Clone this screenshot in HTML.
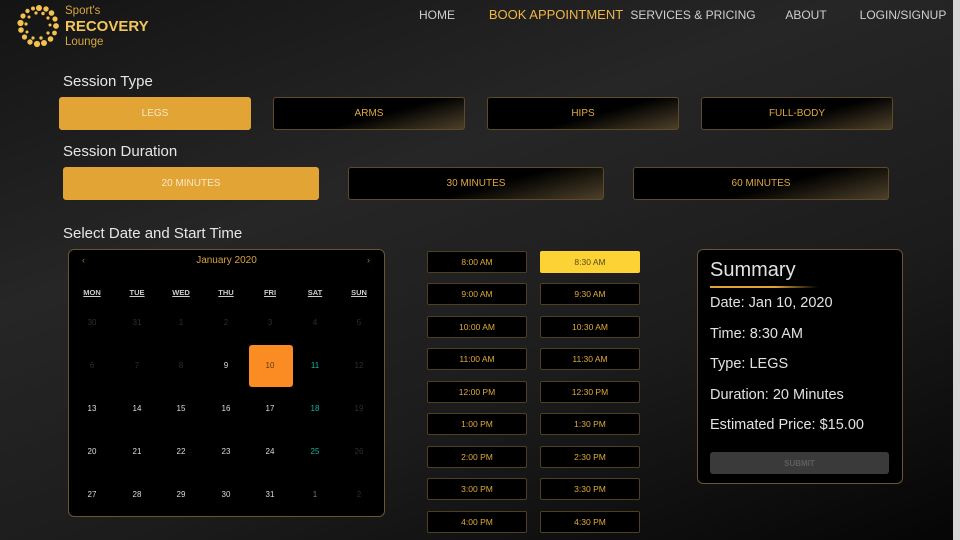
<!DOCTYPE html>
<html><head><meta charset="utf-8"><style>
*{margin:0;padding:0;box-sizing:border-box}
body{width:960px;height:540px;overflow:hidden;font-family:"Liberation Sans",sans-serif;background:linear-gradient(160deg,#141414 0%,#262626 35%,#1c1c1c 65%,#050505 100%);position:relative;color:#ddd}
.a{position:absolute}
.nav{top:8px;font-size:12px;color:#cfcfcf;width:160px;text-align:center;transform:translateX(-80px)}
.lbl{font-size:15px;color:#e6e6e6}
.btn{position:absolute;height:33px;border:1px solid #5c4a2a;border-radius:3px;background:linear-gradient(165deg,#000 55%,#4d4029 100%);color:#e0a93c;font-size:10px;display:flex;align-items:center;justify-content:center}
.btn.on{background:#e3a436;border-color:#e3a436;color:#fbe9c4}
.cal{left:68px;top:249px;width:317px;height:268px;background:#000;border:1.5px solid #6b5530;border-radius:6px}
.d{position:absolute;width:44px;text-align:center;font-size:8px;color:#ddd;transform:translateX(-22px)}
.g{color:#2e2e2e}.t{color:#1ab0a0}
.hd{position:absolute;width:44px;text-align:center;font-size:7.5px;font-weight:bold;color:#ccc;text-decoration:underline;transform:translateX(-22px)}
.ts{position:absolute;width:100px;height:22px;background:#000;border:1px solid #4d3f22;border-radius:2px;color:#e0a93c;font-size:8.5px;display:flex;align-items:center;justify-content:center}
.ts.on{background:#fdd234;border-color:#fdd234;color:#5a4a20}
.sum{left:697px;top:249px;width:206px;height:235px;background:#000;border:1.5px solid #6b5530;border-radius:6px}
.sl{position:absolute;left:12px;font-size:14.5px;color:#e2e2e2}
</style></head><body>
<svg class="a" style="left:16px;top:4px" width="48" height="46" viewBox="0 0 48 46">
<g fill="#f2c14e">
<circle cx="23" cy="4" r="3"/><circle cx="30" cy="5" r="2.7"/><circle cx="35.5" cy="9" r="2.8"/><circle cx="39" cy="15" r="2.6"/><circle cx="40" cy="22" r="2.9"/><circle cx="38.5" cy="29" r="2.4"/><circle cx="34.5" cy="35" r="2.8"/><circle cx="28" cy="39" r="3"/><circle cx="21" cy="40" r="3.1"/><circle cx="14" cy="38" r="2.7"/><circle cx="8.5" cy="33" r="2.6"/><circle cx="5" cy="26" r="2.8"/><circle cx="4.5" cy="19" r="3.1"/><circle cx="7" cy="12" r="2.6"/><circle cx="11.5" cy="7" r="2.2"/><circle cx="17" cy="4.5" r="2"/>
<circle cx="20" cy="9" r="1.6"/><circle cx="27" cy="9.5" r="1.7"/><circle cx="32" cy="14" r="1.6"/><circle cx="34" cy="21" r="1.5"/><circle cx="32" cy="29" r="1.6"/><circle cx="25" cy="34" r="1.7"/><circle cx="17" cy="34" r="1.6"/><circle cx="11" cy="28" r="1.5"/><circle cx="10" cy="20" r="1.6"/><circle cx="13" cy="13" r="1.5"/>
</g></svg>
<div class="a" style="left:65px;top:5px;font-size:11.5px;color:#d6a640;line-height:12px">Sport's</div>
<div class="a" style="left:65px;top:18px;font-size:15px;font-weight:bold;color:#f2c55a;line-height:17px">RECOVERY</div>
<div class="a" style="left:65px;top:36px;font-size:11.5px;color:#d6a640;line-height:12px">Lounge</div>
<div class="a nav" style="left:437px">HOME</div>
<div class="a nav" style="left:556px;color:#f0b545;font-size:13px;top:7px">BOOK APPOINTMENT</div>
<div class="a nav" style="left:693px">SERVICES &amp; PRICING</div>
<div class="a nav" style="left:806px">ABOUT</div>
<div class="a nav" style="left:903px">LOGIN/SIGNUP</div>
<div class="a" style="left:953px;top:0;width:7px;height:540px;background:#d8d8d8"></div>

<div class="a lbl" style="left:63px;top:73px">Session Type</div>
<div class="btn on" style="left:59px;top:97px;width:192px">LEGS</div>
<div class="btn" style="left:273px;top:97px;width:192px">ARMS</div>
<div class="btn" style="left:487px;top:97px;width:192px">HIPS</div>
<div class="btn" style="left:701px;top:97px;width:192px">FULL-BODY</div>
<div class="a lbl" style="left:63px;top:143px">Session Duration</div>
<div class="btn on" style="left:63px;top:167px;width:256px">20 MINUTES</div>
<div class="btn" style="left:348px;top:167px;width:256px">30 MINUTES</div>
<div class="btn" style="left:633px;top:167px;width:256px">60 MINUTES</div>
<div class="a lbl" style="left:63px;top:225px">Select Date and Start Time</div>

<div class="a cal"></div>
<div class="a" style="left:82px;top:255px;font-size:9px;color:#a07a30">‹</div>
<div class="a" style="left:367px;top:255px;font-size:9px;color:#a07a30">›</div>
<div class="a" style="left:68px;width:317px;text-align:center;top:255px;font-size:10px;color:#d9a23e">January 2020</div>
<div class="a" style="left:249px;top:345px;width:44px;height:42px;background:#fb8c24;border-radius:3px"></div>
<div class="hd" style="left:92px;top:288px">MON</div><div class="hd" style="left:137px;top:288px">TUE</div><div class="hd" style="left:181px;top:288px">WED</div><div class="hd" style="left:226px;top:288px">THU</div><div class="hd" style="left:270px;top:288px">FRI</div><div class="hd" style="left:315px;top:288px">SAT</div><div class="hd" style="left:359px;top:288px">SUN</div>
<div class="d g" style="left:92px;top:318px">30</div><div class="d g" style="left:137px;top:318px">31</div><div class="d g" style="left:181px;top:318px">1</div><div class="d g" style="left:226px;top:318px">2</div><div class="d g" style="left:270px;top:318px">3</div><div class="d g" style="left:315px;top:318px">4</div><div class="d g" style="left:359px;top:318px">5</div>
<div class="d g" style="left:92px;top:361px">6</div><div class="d g" style="left:137px;top:361px">7</div><div class="d g" style="left:181px;top:361px">8</div><div class="d" style="left:226px;top:361px">9</div><div class="d" style="left:270px;top:361px;color:#5a3a10">10</div><div class="d t" style="left:315px;top:361px">11</div><div class="d g" style="left:359px;top:361px">12</div>
<div class="d" style="left:92px;top:404px">13</div><div class="d" style="left:137px;top:404px">14</div><div class="d" style="left:181px;top:404px">15</div><div class="d" style="left:226px;top:404px">16</div><div class="d" style="left:270px;top:404px">17</div><div class="d t" style="left:315px;top:404px">18</div><div class="d g" style="left:359px;top:404px">19</div>
<div class="d" style="left:92px;top:447px">20</div><div class="d" style="left:137px;top:447px">21</div><div class="d" style="left:181px;top:447px">22</div><div class="d" style="left:226px;top:447px">23</div><div class="d" style="left:270px;top:447px">24</div><div class="d t" style="left:315px;top:447px">25</div><div class="d g" style="left:359px;top:447px">26</div>
<div class="d" style="left:92px;top:490px">27</div><div class="d" style="left:137px;top:490px">28</div><div class="d" style="left:181px;top:490px">29</div><div class="d" style="left:226px;top:490px">30</div><div class="d" style="left:270px;top:490px">31</div><div class="d" style="left:315px;top:490px;color:#777">1</div><div class="d g" style="left:359px;top:490px">2</div>

<div class="ts" style="left:427px;top:251px">8:00 AM</div><div class="ts on" style="left:540px;top:251px">8:30 AM</div>
<div class="ts" style="left:427px;top:283px">9:00 AM</div><div class="ts" style="left:540px;top:283px">9:30 AM</div>
<div class="ts" style="left:427px;top:316px">10:00 AM</div><div class="ts" style="left:540px;top:316px">10:30 AM</div>
<div class="ts" style="left:427px;top:348px">11:00 AM</div><div class="ts" style="left:540px;top:348px">11:30 AM</div>
<div class="ts" style="left:427px;top:381px">12:00 PM</div><div class="ts" style="left:540px;top:381px">12:30 PM</div>
<div class="ts" style="left:427px;top:413px">1:00 PM</div><div class="ts" style="left:540px;top:413px">1:30 PM</div>
<div class="ts" style="left:427px;top:446px">2:00 PM</div><div class="ts" style="left:540px;top:446px">2:30 PM</div>
<div class="ts" style="left:427px;top:478px">3:00 PM</div><div class="ts" style="left:540px;top:478px">3:30 PM</div>
<div class="ts" style="left:427px;top:511px">4:00 PM</div><div class="ts" style="left:540px;top:511px">4:30 PM</div>

<div class="a sum">
<div class="sl" style="top:9px;font-size:20px">Summary</div>
<div class="a" style="left:12px;top:36px;width:108px;height:2px;background:linear-gradient(90deg,#e3a436 60%,rgba(227,164,54,0))"></div>
<div class="sl" style="top:45px">Date: Jan 10, 2020</div>
<div class="sl" style="top:76px">Time: 8:30 AM</div>
<div class="sl" style="top:106px">Type: LEGS</div>
<div class="sl" style="top:137px">Duration: 20 Minutes</div>
<div class="sl" style="top:167px">Estimated Price: $15.00</div>
<div class="a" style="left:12px;top:202px;width:179px;height:22px;background:#3a3a3a;border-radius:3px;color:#5e5e5e;font-size:8px;font-weight:bold;display:flex;align-items:center;justify-content:center">SUBMIT</div>
</div>
</body></html>
